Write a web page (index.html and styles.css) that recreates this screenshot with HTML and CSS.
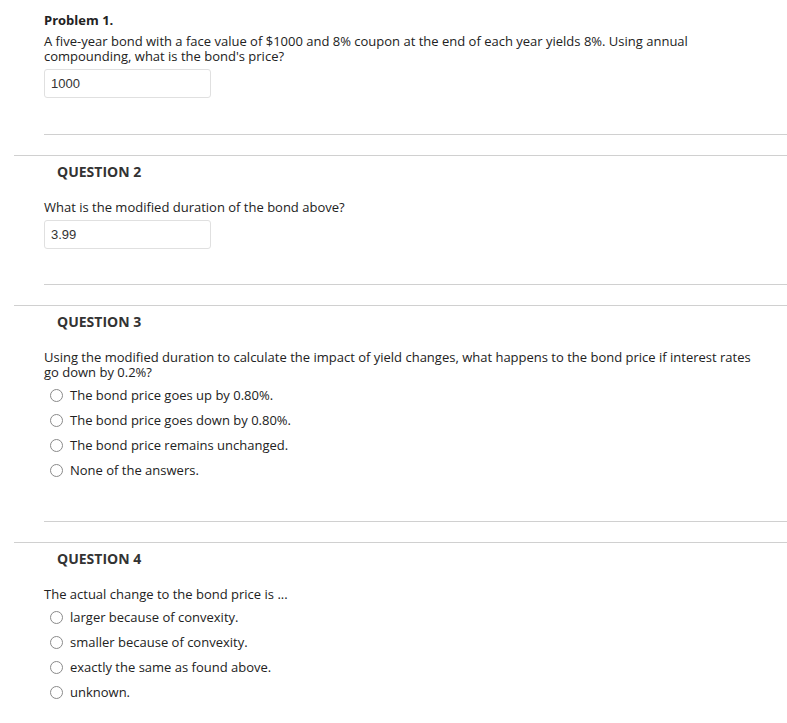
FILE: index.html
```html
<!DOCTYPE html>
<html lang="en">
<head>
  <meta charset="UTF-8">
  <title>Quiz</title>
  <link rel="stylesheet" href="styles.css">
</head>
<body>

  <!-- Problem 1 -->
  <div class="problem">
    <p class="problem-title">Problem 1.</p>
    <p class="prompt">A five-year bond with a face value of $1000 and 8% coupon at the end of each year yields 8%. Using annual compounding, what is the bond's price?</p>
    <input class="answer" type="text" value="1000">
  </div>

  <!-- Question 2 -->
  <div class="question">
    <h3 class="question-title">QUESTION 2</h3>
    <div class="question-body">
      <p class="prompt">What is the modified duration of the bond above?</p>
      <input class="answer" type="text" value="3.99">
    </div>
  </div>

  <!-- Question 3 -->
  <div class="question">
    <h3 class="question-title">QUESTION 3</h3>
    <div class="question-body with-options">
      <p class="prompt">Using the modified duration to calculate the impact of yield changes, what happens to the bond price if interest rates go down by 0.2%?</p>
      <ul class="options">
        <li><span class="radio"></span>The bond price goes up by 0.80%.</li>
        <li><span class="radio"></span>The bond price goes down by 0.80%.</li>
        <li><span class="radio"></span>The bond price remains unchanged.</li>
        <li><span class="radio"></span>None of the answers.</li>
      </ul>
    </div>
  </div>

  <!-- Question 4 -->
  <div class="question">
    <h3 class="question-title">QUESTION 4</h3>
    <div class="question-body with-options">
      <p class="prompt">The actual change to the bond price is ...</p>
      <ul class="options">
        <li><span class="radio"></span>larger because of convexity.</li>
        <li><span class="radio"></span>smaller because of convexity.</li>
        <li><span class="radio"></span>exactly the same as found above.</li>
        <li><span class="radio"></span>unknown.</li>
      </ul>
    </div>
  </div>

</body>
</html>
```

FILE: styles.css
```css
* {
  margin: 0;
  padding: 0;
  box-sizing: border-box;
}

body {
  font-family: "Open Sans", Arial, sans-serif;
  font-size: 13px;
  line-height: 15px;
  color: #222;
  background-color: #fff;
}

/* Bloco do problema 1 */
.problem {
  margin-left: 44px;
  padding-top: 13px;
  padding-bottom: 36px;
  border-bottom: 1px solid #d0d0d0;
}

.problem-title {
  font-weight: bold;
  margin-bottom: 6px;
}

.prompt {
  max-width: 718px;
}

.answer {
  display: block;
  width: 167px;
  height: 29px;
  margin-top: 5px;
  padding: 0 6px;
  border: 1px solid #e0e0e0;
  border-radius: 3px;
  font-family: "Liberation Sans", Arial, sans-serif;
  font-size: 13px;
  color: #333;
  outline: none;
}

/* Questoes */
.question {
  margin-left: 14px;
  margin-top: 20px;
  border-top: 1px solid #d0d0d0;
}

.question-title {
  margin: 6px 0 0 43px;
  font-size: 14px;
  line-height: 20px;
  font-weight: bold;
  color: #333;
}

.question-body {
  margin-left: 30px;
  padding-top: 18px;
  padding-bottom: 35px;
  border-bottom: 1px solid #d0d0d0;
}

.question-body.with-options {
  padding-bottom: 38px;
}

.options {
  list-style: none;
  margin-top: 3px;
  margin-left: 6px;
}

.options li {
  display: flex;
  align-items: center;
  gap: 7px;
  height: 25px;
}

.radio {
  width: 13px;
  height: 13px;
  border: 1px solid #8a8a8a;
  border-radius: 50%;
  background-color: #fff;
  flex-shrink: 0;
}
```
